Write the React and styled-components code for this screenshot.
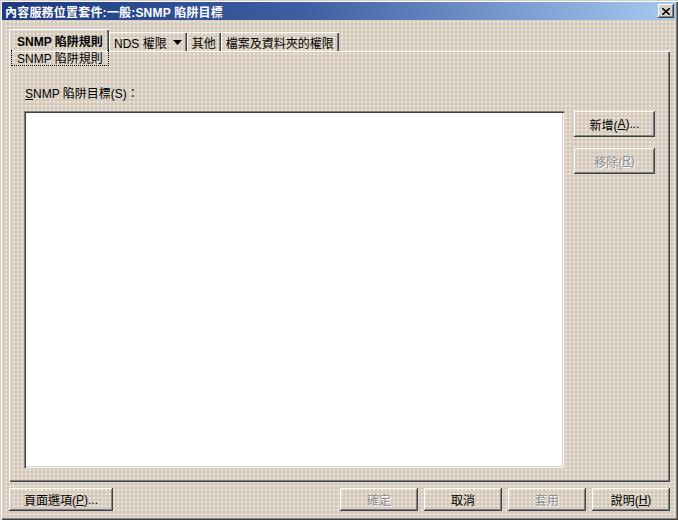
import React from "react";
import styled, { createGlobalStyle } from "styled-components";

const Global = createGlobalStyle`
  html, body {
    margin: 0;
    padding: 0;
    background: #d6cdc7;
  }
  * {
    box-sizing: border-box;
  }
`;

const font = `"Liberation Sans", "Noto Sans CJK TC", sans-serif`;

const Window = styled.div`
  width: 678px;
  height: 520px;
  display: flex;
  flex-direction: column;
  background-color: #d6cac6;
  background-image: radial-gradient(circle, #eeeac0 0.7px, transparent 0.9px);
  background-size: 4px 4px;
  box-shadow: inset 1px 1px #d4d0c8, inset 2px 2px #ffffff,
    inset -1px -1px #404040, inset -2px -2px #808080;
  font-family: ${font};
  font-size: 12px;
  color: #000;
  padding: 2px;
`;

const TitleBar = styled.div`
  height: 18px;
  display: flex;
  align-items: center;
  justify-content: space-between;
  padding: 0 2px 0 3px;
  background: linear-gradient(to right, #1d3a80 0%, #3e5fa2 45%, #a6caf0 100%);
  color: #fff;
  font-weight: bold;
  font-size: 12px;
  letter-spacing: 0.2px;
`;

const CloseButton = styled.div`
  width: 16px;
  height: 14px;
  display: flex;
  align-items: center;
  justify-content: center;
  background: #d4d0c8;
  box-shadow: inset -1px -1px #404040, inset 1px 1px #ffffff,
    inset -2px -2px #808080;
`;

const Body = styled.div`
  flex: 1;
  display: flex;
  flex-direction: column;
  padding: 9px 6px 7px 7px;
`;

const TabStrip = styled.div`
  display: flex;
  align-items: flex-end;
  height: 22px;
  position: relative;
  z-index: 2;
`;

const Tab = styled.div`
  position: relative;
  height: ${({ $active }) => ($active ? "22px" : "19px")};
  padding: ${({ $active }) => ($active ? "0 7px" : "0 5px 0 4px")};
  display: flex;
  align-items: center;
  gap: 6px;
  font-weight: ${({ $active }) => ($active ? "bold" : "normal")};
  border-top: 1px solid #fff;
  border-left: 1px solid #fff;
  box-shadow: inset -1px 0 #404040, inset -2px 0 #808080;
  white-space: nowrap;
  ${({ $active }) => ($active ? "width: 100px;" : "")}
`;

const SubLabel = styled.div`
  position: absolute;
  left: 1px;
  top: 20px;
  width: 98px;
  height: 16px;
  padding-left: 5px;
  display: flex;
  align-items: center;
  font-weight: normal;
  border: 1px dotted #000;
  border-top: none;
`;

const Panel = styled.div`
  flex: 1;
  display: flex;
  gap: 10px;
  padding: 35px 15px 14px 14px;
  border-top: 1px solid #fff;
  border-left: 1px solid #fff;
  box-shadow: inset -1px -1px #404040, inset -2px -2px #808080;
`;

const ListColumn = styled.div`
  flex: 1;
  display: flex;
  flex-direction: column;
`;

const Label = styled.div`
  height: 14px;
  line-height: 14px;
  margin-bottom: 10px;
  padding-left: 1px;
`;

const ListBox = styled.div`
  flex: 1;
  background: #fff;
  box-shadow: inset 1px 1px #808080, inset 2px 2px #404040,
    inset -1px -1px #ffffff, inset -2px -2px #d4d0c8;
`;

const SideButtons = styled.div`
  width: 81px;
  display: flex;
  flex-direction: column;
  gap: 11px;
  padding-top: 24px;
`;

const Button = styled.div`
  width: ${({ $w }) => $w || "78px"};
  height: ${({ $h }) => $h || "23px"};
  display: flex;
  align-items: center;
  justify-content: center;
  color: ${({ $disabled }) => ($disabled ? "#8c8c8c" : "#000")};
  text-shadow: ${({ $disabled }) => ($disabled ? "1px 1px #fff" : "none")};
  box-shadow: inset -1px -1px #404040, inset 1px 1px #ffffff,
    inset -2px -2px #808080;
  white-space: nowrap;
`;

const Key = styled.span`
  text-decoration: underline;
`;

const Footer = styled.div`
  display: flex;
  align-items: center;
  gap: 6px;
  margin-top: 6px;
`;

const Spacer = styled.div`
  flex: 1;
`;

function DownArrow() {
  return (
    <svg width="9" height="5" viewBox="0 0 9 5">
      <path d="M0 0h9L4.5 5z" fill="#000" />
    </svg>
  );
}

export default function App() {
  return (
    <>
      <Global />
      <Window>
        <TitleBar>
          <span>內容服務位置套件:一般:SNMP 陷阱目標</span>
          <CloseButton>
            <svg width="8" height="7" viewBox="0 0 8 7">
              <path d="M0 0L8 7M8 0L0 7" stroke="#000" strokeWidth="1.6" />
            </svg>
          </CloseButton>
        </TitleBar>
        <Body>
          <TabStrip>
            <Tab $active>
              SNMP 陷阱規則
              <SubLabel>SNMP 陷阱規則</SubLabel>
            </Tab>
            <Tab>
              NDS 權限 <DownArrow />
            </Tab>
            <Tab>其他</Tab>
            <Tab>檔案及資料夾的權限</Tab>
          </TabStrip>
          <Panel>
            <ListColumn>
              <Label>
                <Key>S</Key>NMP 陷阱目標(S)：
              </Label>
              <ListBox />
            </ListColumn>
            <SideButtons>
              <Button $w="81px" $h="26px">
                新增(<Key>A</Key>)...
              </Button>
              <Button $w="81px" $h="26px" $disabled>
                移除(<Key>R</Key>)
              </Button>
            </SideButtons>
          </Panel>
          <Footer>
            <Button $w="104px">
              頁面選項(<Key>P</Key>)...
            </Button>
            <Spacer />
            <Button $disabled>確定</Button>
            <Button>取消</Button>
            <Button $disabled>套用</Button>
            <Button>
              說明(<Key>H</Key>)
            </Button>
          </Footer>
        </Body>
      </Window>
    </>
  );
}
